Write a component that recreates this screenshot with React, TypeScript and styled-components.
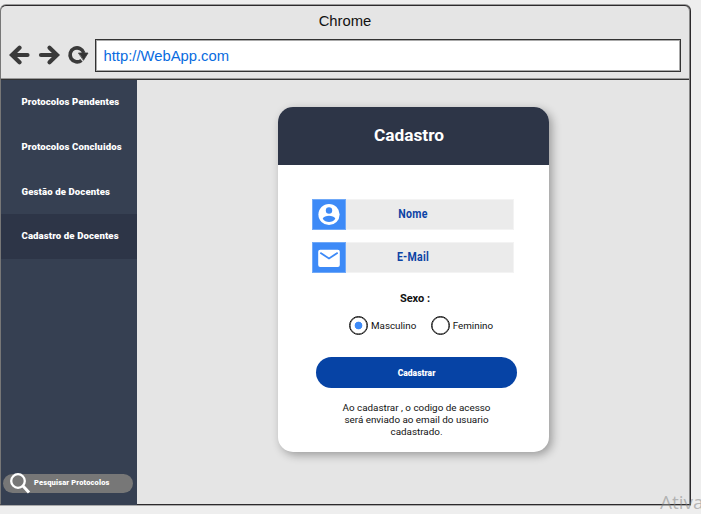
import React from 'react';
import styled, { createGlobalStyle } from 'styled-components';

const GlobalStyle = createGlobalStyle`
  * { box-sizing: border-box; }
  html, body { margin: 0; background: #eeeeee; }
  body { font-family: Roboto, 'Liberation Sans', sans-serif; overflow: hidden; }
  p, h1, h2 { margin: 0; }
`;

const Page = styled.div`
  position: relative;
  width: 701px;
  height: 514px;
  padding-top: 5px;
  overflow: hidden;
`;

const Browser = styled.div`
  display: flex;
  flex-direction: column;
  width: 691px;
  height: 500px;
  background: #e5e5e5;
  border: 1px solid #2c2a2c;
  border-left-color: #777;
  border-radius: 6px 6px 0 0;
  box-shadow: 0 -1px 0 #999, inset -1px 0 0 #888, 0 1px 0 #aaa;
`;

const Chrome = styled.header`
  flex: none;
  height: 74px;
  margin-right: 1px;
  border-bottom: 1px solid #333;
  box-shadow: inset 0 -1px 0 #999;
`;

const WindowTitle = styled.div`
  height: 33px;
  text-align: center;
  font: 14.8px/30px 'Liberation Sans', sans-serif;
  color: #111;
`;

const Toolbar = styled.div`
  display: flex;
  align-items: center;
  height: 33px;
  padding: 0 8px;
`;

const NavIcons = styled.svg`
  flex: none;
  width: 86px;
  height: 33px;
  display: block;
`;

const Address = styled.div`
  flex: 1;
  height: 33px;
  padding-left: 7.5px;
  border: 1px solid #333;
  box-shadow: inset 0 0 0 1px #aaa;
  background: #fff;
  color: #086be0;
  font: 14.8px/32px 'Liberation Sans', sans-serif;
`;

const Body = styled.div`
  flex: 1;
  display: flex;
  min-height: 0;
`;

const Sidebar = styled.nav`
  display: flex;
  flex-direction: column;
  width: 136px;
  height: 425px;
  background: #364052;
`;

const MenuItem = styled.a<{ $active?: boolean }>`
  height: 44.8px;
  padding-left: 20.5px;
  line-height: 44px;
  background: ${(p) => (p.$active ? '#2d3547' : 'transparent')};
  color: #fff;
  font-size: 9.6px;
  letter-spacing: 0.11px;
  font-weight: 900;
  white-space: nowrap;
`;

const Search = styled.div`
  display: flex;
  align-items: center;
  width: 130px;
  height: 19px;
  margin: auto 0 12px 2px;
  padding-bottom: 2px;
  border-radius: 10px;
  background: #777;
  color: #fff;
  font-size: 7.5px;
  font-weight: 900;
  letter-spacing: 0.15px;
  white-space: nowrap;
`;

const SearchIcon = styled.svg`
  width: 22px;
  height: 22px;
  margin: 1px 3px 0 6px;
  flex: none;
`;

const Main = styled.main`
  flex: 1;
  padding: 27px 0 0 141px;
`;

const Card = styled.section`
  width: 271px;
  height: 345px;
  border-radius: 15px;
  background: #fff;
  box-shadow: 3px 3px 10px rgba(0, 0, 0, 0.33);
  overflow: hidden;
`;

const CardHeader = styled.h1`
  height: 58px;
  padding-right: 9px;
  background: #2d3547;
  color: #fff;
  font-size: 17.3px;
  font-weight: 700;
  line-height: 57px;
  text-align: center;
`;

const Form = styled.div`
  display: flex;
  flex-direction: column;
  padding: 34px 32px 0 34px;
`;

const Field = styled.div`
  display: flex;
  width: 202px;
  height: 31px;
  margin-bottom: 12px;
  background: #ebebeb;
  border: 1px solid #f3f3f3;
`;

const FieldIcon = styled.svg`
  width: 34px;
  height: 31px;
  margin: -1px 0 0 -1px;
  background: #3d8af7;
  border: 1px solid #70a9f8;
`;

const FieldLabel = styled.div`
  width: 134px;
  text-align: center;
  color: #0b43a5;
  font-size: 12px;
  font-weight: 700;
  letter-spacing: 0.3px;
  line-height: 28px;
  transform: scaleX(0.88);
`;

const Legend = styled.h2`
  margin: 7px 0 0 1px;
  text-align: center;
  font-size: 11px;
  font-weight: 700;
  line-height: 14px;
  color: #111;
`;

const Options = styled.div`
  display: flex;
  gap: 14.5px;
  margin: 10px 0 0 37px;
`;

const Option = styled.label`
  display: flex;
  align-items: center;
  gap: 3px;
  color: #111;
  font-size: 9.8px;
  height: 18px;
  white-space: nowrap;
`;

const Radio = styled.span<{ $checked?: boolean }>`
  width: 19px;
  height: 19px;
  border: 1.5px solid #111;
  box-shadow: inset 0 0 0 0.5px #111;
  border-radius: 50%;
  background: ${(p) =>
    p.$checked ? 'radial-gradient(circle, #3d8af7 3.5px, #fff 4.2px)' : '#fff'};
`;

const Submit = styled.button`
  width: 201px;
  height: 31px;
  margin: 23px 0 0 4px;
  padding: 0;
  border: 0;
  border-radius: 16px;
  background: #0643a5;
  color: #fff;
  font: 900 9.3px/31px Roboto, sans-serif;
`;

const SubmitLabel = styled.span`
  display: inline-block;
  transform: scaleX(0.92);
`;

const Note = styled.p`
  margin: 14px 0 0 2px;
  width: 205px;
  text-align: center;
  white-space: pre-line;
  color: #111;
  font-size: 9.85px;
  line-height: 12.2px;
`;

const Watermark = styled.div`
  position: absolute;
  left: 660px;
  top: 489px;
  color: rgba(135, 135, 135, 0.55);
  font: 19px/26px 'Open Sans', sans-serif;
  white-space: nowrap;
`;

export default function App() {
  return (
    <Page>
      <GlobalStyle />
      <Browser>
        <Chrome>
          <WindowTitle>Chrome</WindowTitle>
          <Toolbar>
            <NavIcons viewBox="0 0 86 33" fill="none" stroke="#3a3a3a" strokeWidth="4.2" strokeLinecap="round" strokeLinejoin="miter">
              <path d="M18.500 16H4M10.500 8.700 3 16l7.500 7.300" />
              <path d="M32 16h15M40.500 8.700 48 16l-7.500 7.300" />
              <path d="M72.500 21.300A7 7 0 1 1 74.800 14" strokeWidth="3.600" strokeLinecap="butt" />
              <path d="M69.800 14H79l-4.400 7Z" fill="#333" strokeWidth="0.800" />
            </NavIcons>
            <Address>http://WebApp.com</Address>
          </Toolbar>
        </Chrome>
        <Body>
          <Sidebar>
            <MenuItem>Protocolos Pendentes</MenuItem>
            <MenuItem>Protocolos Concluidos</MenuItem>
            <MenuItem>Gestão de Docentes</MenuItem>
            <MenuItem $active>Cadastro de Docentes</MenuItem>
            <Search>
              <SearchIcon viewBox="0 0 22 22" fill="none" stroke="#fff">
                <circle cx="9" cy="9" r="6.800" strokeWidth="2.300" />
                <path d="m14 14 6 6.500" strokeWidth="3" />
              </SearchIcon>
              Pesquisar Protocolos
            </Search>
          </Sidebar>
          <Main>
            <Card>
              <CardHeader>Cadastro</CardHeader>
              <Form>
                <Field>
                  <FieldIcon viewBox="0 0 32 29">
                    <circle cx="16" cy="14.500" r="10.600" fill="#fff" />
                    <circle cx="16" cy="10.500" r="3.200" fill="#3d8af7" />
                    <path d="M9.700 18.700C10.500 16.500 13.500 15.800 16 15.800s5.500.7 6.300 2.900C20.800 21 18.600 22 16 22s-4.800-1-6.300-3.300Z" fill="#3d8af7" />
                  </FieldIcon>
                  <FieldLabel>Nome</FieldLabel>
                </Field>
                <Field>
                  <FieldIcon viewBox="0 0 32 29">
                    <rect x="5.200" y="6.700" width="21.600" height="17.300" rx="2" fill="#fff" />
                    <path d="m7.300 9.800 8.700 5.600 8.700-5.600" fill="none" stroke="#3d8af7" strokeWidth="1.800" />
                  </FieldIcon>
                  <FieldLabel>E-Mail</FieldLabel>
                </Field>
                <Legend>Sexo :</Legend>
                <Options>
                  <Option><Radio $checked />Masculino</Option>
                  <Option><Radio />Feminino</Option>
                </Options>
                <Submit><SubmitLabel>Cadastrar</SubmitLabel></Submit>
                <Note>{'Ao cadastrar , o codigo de acesso\nserá enviado ao email do usuario\ncadastrado.'}</Note>
              </Form>
            </Card>
          </Main>
        </Body>
      </Browser>
      <Watermark>Ativa</Watermark>
    </Page>
  );
}
